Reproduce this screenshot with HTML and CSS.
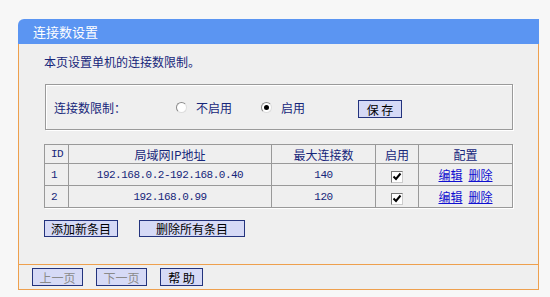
FILE: index.html
```html
<!DOCTYPE html>
<html>
<head>
<meta charset="utf-8">
<link rel="stylesheet" href="styles.css">
</head>
<body>
<div class="panel">
  <div class="hd">连接数设置</div>
  <div class="bd">
    <div class="content">
      <p class="desc">本页设置单机的连接数限制。</p>
      <div class="box">
        <span class="lbl">连接数限制：</span>
        <span class="radio r1"></span><span class="rlbl">不启用</span>
        <span class="radio r2 on"></span><span class="rlbl">启用</span>
        <span class="btn save">保 存</span>
      </div>
      <table class="tbl">
        <colgroup><col class="w-id"><col class="w-ip"><col class="w-max"><col class="w-en"><col></colgroup>
        <tr class="th"><td class="c-id mono">ID</td><td>局域网IP地址</td><td>最大连接数</td><td>启用</td><td>配置</td></tr>
        <tr><td class="c-id mono">1</td><td class="mono">192.168.0.2-192.168.0.40</td><td class="mono">140</td><td><span class="chk"><svg width="10" height="10" viewBox="0 0 10 10"><path d="M1.5 4.5 L4 7 L8.5 1.5" stroke="#000" stroke-width="2" fill="none"/></svg></span></td><td><a class="lnk">编辑</a><a class="lnk">删除</a></td></tr>
        <tr><td class="c-id mono">2</td><td class="mono">192.168.0.99</td><td class="mono">120</td><td><span class="chk"><svg width="10" height="10" viewBox="0 0 10 10"><path d="M1.5 4.5 L4 7 L8.5 1.5" stroke="#000" stroke-width="2" fill="none"/></svg></span></td><td><a class="lnk">编辑</a><a class="lnk">删除</a></td></tr>
      </table>
      <div class="acts">
        <span class="btn wide1">添加新条目</span>
        <span class="btn wide2">删除所有条目</span>
      </div>
    </div>
    <div class="ft">
      <span class="btn fb dis">上一页</span>
      <span class="btn fb dis">下一页</span>
      <span class="btn fb help">帮 助</span>
    </div>
  </div>
</div>
</body>
</html>
```
FILE: styles.css
```css
html, body { margin: 0; padding: 0; }
body {
  background: #f7f7f7;
  font-family: "Noto Sans CJK SC", "Liberation Sans", sans-serif;
  font-size: 12px;
  color: #16267a;
}
.panel { margin: 19px 0 0 18px; width: 521px; }
.hd {
  height: 25px; line-height: 25px;
  background: #5b95f2;
  border-radius: 6px 0 0 0;
  color: #fff; font-size: 13px;
  padding-left: 15px;
}
.bd { background: #efefef; border: 1px solid #eea04e; border-top: 0; }
.content { height: 220px; padding-left: 25px; box-sizing: border-box; }
.desc { margin: 0; padding-top: 10px; line-height: 16px; height: 16px; }
.box {
  margin-top: 14px; margin-left: 1px;
  width: 466px; height: 44px;
  border: 1px solid #9a9a9a;
  box-shadow: 1px 1px 0 #fff, inset 1px 1px 0 #fff;
  display: flex; align-items: center;
  box-sizing: content-box;
}
.lbl { margin-left: 8px; width: 122px; }
.radio {
  width: 9px; height: 9px; border-radius: 50%;
  border: 1px solid #8a8a8a; border-bottom-color: #ddd; border-right-color: #ddd;
  background: #fff; position: relative; display: inline-block;
}
.radio.on::after {
  content: ""; position: absolute; left: 2px; top: 2px;
  width: 5px; height: 5px; border-radius: 50%; background: #000;
}
.rlbl { margin-left: 9px; }
.r1 + .rlbl { margin-right: 29px; }
.r2 + .rlbl { margin-right: 53px; }
.btn {
  display: inline-flex; align-items: center; justify-content: center;
  background: #d6daf6;
  border: 1px solid #23337d;
  box-sizing: border-box;
  color: #000;
}
.save { width: 44px; height: 18px; margin-top: 4px; }
.tbl {
  margin-top: 14px;
  width: 469px;
  table-layout: fixed;
  border-collapse: collapse;
  border: 1px solid #999;
  box-shadow: 1px 1px 0 #fff;
}
.w-id { width: 24px; }
.w-ip { width: 203px; }
.w-max { width: 104px; }
.w-en { width: 43px; }
.tbl td {
  border: 1px solid #999;
  text-align: center;
  padding: 0;
  height: 21px;
}
.tbl .th td { height: 18px; }
.tbl td.c-id { text-align: left; padding-left: 6px; }
.mono { font-family: "Liberation Mono", "DejaVu Sans Mono", monospace; font-size: 11px; letter-spacing: -0.5px; }
.chk {
  display: inline-flex; width: 12px; height: 12px; box-sizing: border-box;
  border: 1px solid #777; border-right-color: #ccc; border-bottom-color: #ccc;
  background: #fff; align-items: center; justify-content: center; vertical-align: middle;
}
.lnk { color: #1010d0; text-decoration: underline; }
.lnk + .lnk { margin-left: 6px; }
.acts { margin-top: 12px; display: flex; gap: 21px; }
.wide1 { width: 74px; height: 17px; }
.wide2 { width: 106px; height: 17px; }
.ft {
  border-top: 1px solid #eea04e;
  height: 25px; box-sizing: border-box;
  padding: 3px 0 0 13px;
  display: flex; gap: 13px; align-items: flex-start;
}
.fb { height: 18px; }
.dis { width: 51px; color: #8a8a8a; }
.help { width: 43px; }
```
